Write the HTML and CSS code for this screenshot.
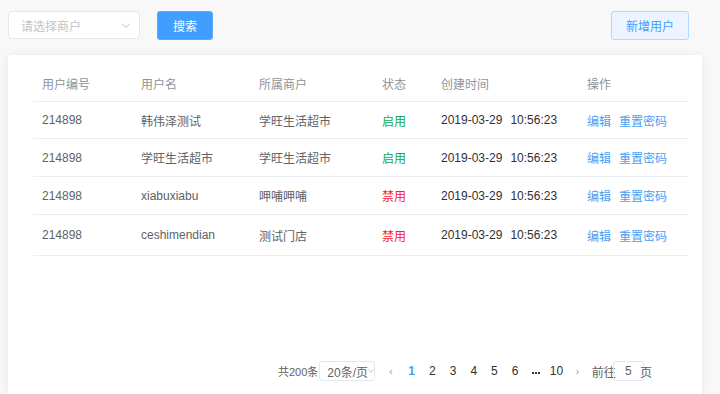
FILE: index.html
```html
<!DOCTYPE html>
<html lang="zh-CN">

<head>
    <meta charset="UTF-8">
    <meta name="viewport" content="width=device-width, initial-scale=1.0">
    <title>用户管理</title>

    <link rel="stylesheet" href="styles.css">

</head>

<body>

    <div class="toolbar">
        <div class="select">
            <span class="placeholder">请选择商户</span>
            <span class="arrow"></span>
        </div>
        <div class="btn btn-primary">搜索</div>
        <div class="spacer"></div>
        <div class="btn btn-plain">新增用户</div>
    </div>

    <div class="card">
        <table class="grid">
            <colgroup>
                <col class="c1"><col class="c2"><col class="c3"><col class="c4"><col class="c5"><col class="c6">
            </colgroup>
            <thead>
                <tr>
                    <th>用户编号</th>
                    <th>用户名</th>
                    <th>所属商户</th>
                    <th>状态</th>
                    <th>创建时间</th>
                    <th>操作</th>
                </tr>
            </thead>
            <tbody>
                <tr>
                    <td>214898</td>
                    <td>韩伟泽测试</td>
                    <td>学旺生活超市</td>
                    <td class="on">启用</td>
                    <td class="time">2019-03-29<span>10:56:23</span></td>
                    <td><a class="link">编辑</a><a class="link">重置密码</a></td>
                </tr>
                <tr>
                    <td>214898</td>
                    <td>学旺生活超市</td>
                    <td>学旺生活超市</td>
                    <td class="on">启用</td>
                    <td class="time">2019-03-29<span>10:56:23</span></td>
                    <td><a class="link">编辑</a><a class="link">重置密码</a></td>
                </tr>
                <tr>
                    <td>214898</td>
                    <td>xiabuxiabu</td>
                    <td>呷哺呷哺</td>
                    <td class="off">禁用</td>
                    <td class="time">2019-03-29<span>10:56:23</span></td>
                    <td><a class="link">编辑</a><a class="link">重置密码</a></td>
                </tr>
                <tr class="last">
                    <td>214898</td>
                    <td>ceshimendian</td>
                    <td>测试门店</td>
                    <td class="off">禁用</td>
                    <td class="time">2019-03-29<span>10:56:23</span></td>
                    <td><a class="link">编辑</a><a class="link">重置密码</a></td>
                </tr>
            </tbody>
        </table>

        <div class="pager">
            <span class="total">共200条</span>
            <span class="sizes">20条/页<span class="arrow small"></span></span>
            <span class="nav">&lsaquo;</span>
            <span class="num active">1</span>
            <span class="num">2</span>
            <span class="num">3</span>
            <span class="num">4</span>
            <span class="num">5</span>
            <span class="num">6</span>
            <span class="num more"><i></i><i></i><i></i></span>
            <span class="num">10</span>
            <span class="nav next">&rsaquo;</span>
            <span class="jump">前往</span>
            <span class="jump-box">5</span>
            <span class="jump-end">页</span>
        </div>
    </div>

</body>

</html>
```

FILE: styles.css
```css
body {
    margin: 0;
    padding: 11px 0 0 8px;
    background-color: #f8f8f8;
    font-family: "Liberation Sans", "Noto Sans CJK SC", sans-serif;
    font-size: 12px;
    color: #606266;
    height: 394px;
    overflow: hidden;
    box-sizing: border-box;
}

.toolbar {
    display: flex;
    align-items: flex-start;
    width: 681px;
}

.select {
    width: 132px;
    height: 28px;
    box-sizing: border-box;
    border: 1px solid #e4e7ed;
    border-radius: 4px;
    background: #fff;
    display: flex;
    align-items: center;
    justify-content: space-between;
    padding: 0 10px 0 12px;
}

.placeholder {
    color: #c0c4cc;
}

.arrow {
    width: 5px;
    height: 5px;
    border-right: 1px solid #d0d3d9;
    border-bottom: 1px solid #d0d3d9;
    transform: rotate(45deg);
    margin-top: -3px;
}

.arrow.small {
    display: inline-block;
    width: 3px;
    height: 3px;
    margin: 0 0 2px 1px;
    vertical-align: middle;
}

.btn {
    height: 29px;
    box-sizing: border-box;
    border-radius: 3px;
    display: flex;
    align-items: center;
    justify-content: center;
}

.btn-primary {
    margin-left: 17px;
    width: 56px;
    background: #409eff;
    border: 1px solid #5aaaf8;
    color: #fff;
}

.spacer {
    flex: 1;
}

.btn-plain {
    width: 78px;
    background: #ecf5ff;
    border: 1px solid #b3d8ff;
    color: #409eff;
}

.card {
    margin-top: 15px;
    width: 694px;
    height: 339px;
    box-sizing: border-box;
    background: #fff;
    border-radius: 4px 4px 0 0;
    box-shadow: 0 1px 10px rgba(0, 0, 0, 0.08);
    padding: 10px 13px 0 25px;
}

.grid {
    width: 656px;
    border-collapse: collapse;
    table-layout: fixed;
}

.c1 { width: 99px; }
.c2 { width: 118px; }
.c3 { width: 123px; }
.c4 { width: 59px; }
.c5 { width: 146px; }
.c6 { width: 111px; }

.grid th,
.grid td {
    text-align: left;
    padding: 0 9px;
    border-bottom: 1px solid #ebeef5;
    white-space: nowrap;
}

.grid th {
    height: 36px;
    font-weight: normal;
    color: #909399;
}

.grid td {
    height: 37px;
}

.grid tr:first-child td {
    height: 36px;
}

.grid tr.last td {
    height: 40px;
}

.on {
    color: #13a83e;
}

.off {
    color: #f5222d;
}

.time {
    color: #303133;
}

.time span {
    margin-left: 8px;
}

.link {
    color: #4a9ff5;
    margin-right: 8px;
    cursor: pointer;
}

.pager {
    display: flex;
    align-items: center;
    margin: 105px 0 0 245px;
    color: #606266;
}

.total {
    font-size: 11px;
}

.sizes {
    margin-left: 1px;
    width: 56px;
    height: 20px;
    box-sizing: border-box;
    border: 1px solid #e4e7ed;
    border-radius: 3px;
    display: flex;
    align-items: center;
    padding-left: 7px;
}

.nav {
    width: 21px;
    text-align: center;
    margin-left: 5px;
    color: #909399;
    font-size: 10px;
}

.nav.next {
    margin-left: 0;
}

.num {
    width: 20.7px;
    text-align: center;
    color: #303133;
}

.num.active {
    color: #409eff;
    font-weight: bold;
}

.more {
    display: flex;
    justify-content: center;
    gap: 1px;
    padding-top: 3px;
}

.more i {
    width: 2px;
    height: 2px;
    background: #303133;
}

.jump {
    margin-left: 4px;
}

.jump-box {
    width: 31px;
    height: 20px;
    box-sizing: border-box;
    border: 1px solid #e4e7ed;
    border-radius: 3px;
    display: flex;
    align-items: center;
    justify-content: center;
    margin-left: -3px;
}

.jump-end {
    margin-left: -4px;
}
```
